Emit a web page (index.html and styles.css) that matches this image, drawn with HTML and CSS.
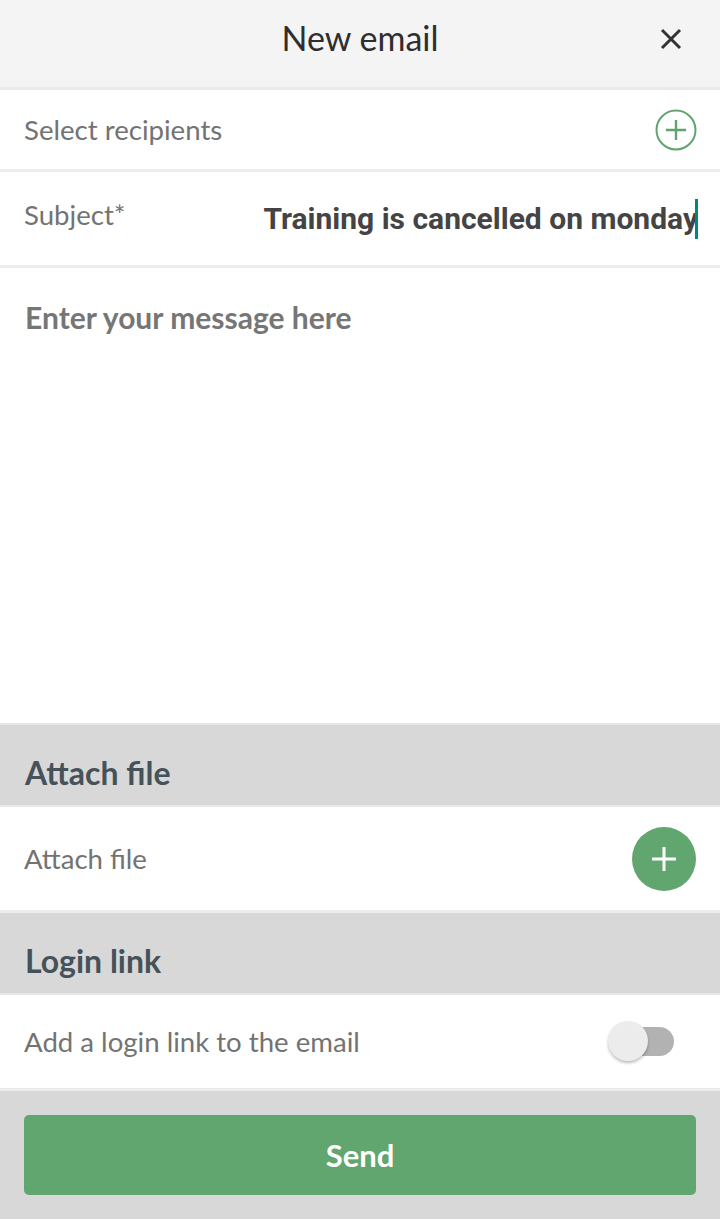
FILE: index.html
```html
<!DOCTYPE html>
<html>
<head>
  <title>New email</title>
  <link rel="stylesheet" href="styles.css">
</head>
<body>
  <div class="screen">
    <header class="topbar">
      <h1>New email</h1>
      <button class="close" aria-label="Close">
        <svg width="22" height="22" viewBox="0 0 22 22">
          <path d="M2 2 L20 20 M20 2 L2 20" stroke="#333" stroke-width="3" fill="none"/>
        </svg>
      </button>
    </header>

    <div class="row recipients">
      <span class="label">Select recipients</span>
      <svg class="add-outline" width="42" height="42" viewBox="0 0 42 42">
        <circle cx="21" cy="21" r="19.5" stroke="#5fa46e" stroke-width="2" fill="none"/>
        <path d="M21 11 V31 M11 21 H31" stroke="#5fa46e" stroke-width="2.4" fill="none"/>
      </svg>
    </div>

    <div class="row subject">
      <span class="label">Subject*</span>
      <span class="value">Training is cancelled on monday<span class="caret"></span></span>
    </div>

    <div class="message">Enter your message here</div>

    <div class="section-head">Attach file</div>
    <div class="row attach">
      <span class="label">Attach file</span>
      <span class="add-fill">
        <svg width="26" height="26" viewBox="0 0 26 26">
          <path d="M13 1 V25 M1 13 H25" stroke="#fff" stroke-width="3" fill="none"/>
        </svg>
      </span>
    </div>

    <div class="section-head">Login link</div>
    <div class="row login">
      <span class="label">Add a login link to the email</span>
      <span class="toggle"><span class="knob"></span></span>
    </div>

    <div class="footer">
      <button class="send">Send</button>
    </div>
  </div>
</body>
</html>
```

FILE: styles.css
```css
* {
  box-sizing: border-box;
}
body {
  margin: 0;
  font-family: Lato, "Open Sans", sans-serif;
  background: #fff;
}
.screen {
  width: 720px;
  height: 1219px;
  display: flex;
  flex-direction: column;
  overflow: hidden;
}
.topbar {
  flex: none;
  height: 90px;
  background: #f4f4f4;
  border-bottom: 3px solid #ebebeb;
  display: flex;
  align-items: center;
  justify-content: center;
  position: relative;
}
.topbar h1 {
  margin: 0;
  font-weight: 400;
  font-size: 34px;
  color: #2e2e2e;
  padding-bottom: 12px;
}
.close {
  position: absolute;
  right: 38px;
  top: 28px;
  background: none;
  border: none;
  padding: 0;
  line-height: 0;
}
.row {
  flex: none;
  display: flex;
  align-items: center;
  justify-content: space-between;
  padding: 0 24px;
  background: #fff;
  border-bottom: 3px solid #ececec;
}
.label {
  font-size: 27.6px;
  color: #737373;
}
.recipients {
  height: 82px;
}
.add-outline {
  margin-right: -1px;
}
.subject {
  height: 96px;
}
.subject .label {
  padding-bottom: 8px;
}
.subject .value {
  font-family: Roboto, sans-serif;
  font-weight: 700;
  font-size: 30px;
  color: #444;
  display: flex;
  align-items: center;
  margin-right: -2px;
}
.caret {
  width: 3px;
  height: 40px;
  background: #00897b;
  margin-left: -3px;
}
.message {
  flex: none;
  height: 457px;
  padding: 31px 25px 0;
  font-weight: 700;
  font-size: 30px;
  color: #767676;
  border-bottom: 2px solid #e6e6e6;
}
.section-head {
  flex: none;
  height: 82px;
  background: #d8d8d8;
  padding: 14px 25px 0;
  display: flex;
  align-items: center;
  font-weight: 700;
  font-size: 32px;
  color: #46525a;
  border-bottom: 2px solid #e8e8e8;
}
.attach {
  height: 106px;
}
.add-fill {
  width: 64px;
  height: 64px;
  border-radius: 50%;
  background: #62a66f;
  display: flex;
  align-items: center;
  justify-content: center;
}
.login {
  height: 96px;
}
.toggle {
  position: relative;
  width: 64px;
  height: 29px;
  border-radius: 15px;
  background: #b2b2b2;
  margin-right: 22px;
}
.knob {
  position: absolute;
  left: -2px;
  top: -6px;
  width: 40px;
  height: 40px;
  border-radius: 50%;
  background: #ececec;
  box-shadow: 0 2px 3px rgba(0, 0, 0, 0.25);
}
.footer {
  flex: 1;
  background: #d8d8d8;
  padding: 24px 24px 0;
}
.send {
  width: 100%;
  height: 80px;
  border: none;
  border-radius: 5px;
  background: #62a66f;
  color: #fff;
  font-family: Lato, sans-serif;
  font-weight: 700;
  font-size: 31px;
}
```
